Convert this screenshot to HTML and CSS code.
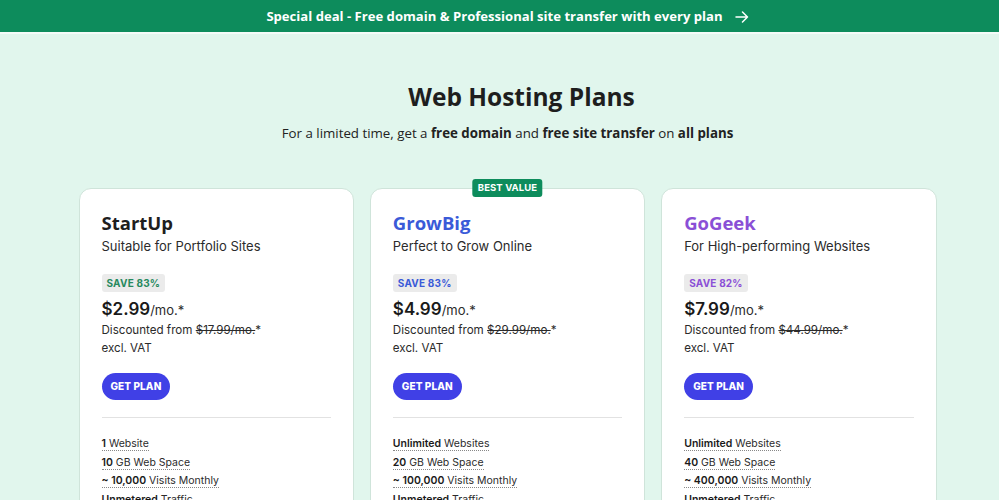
FILE: index.html
```html
<!DOCTYPE html>
<html lang="en">
<head>
<meta charset="utf-8">
<title>Web Hosting Plans</title>
<link rel="stylesheet" href="styles.css">
</head>
<body>
<div class="promo">
  <span>Special deal - Free domain &amp; Professional site transfer with every plan</span>
  <svg class="arrow" width="14" height="12" viewBox="0 0 14 12" aria-hidden="true"><path d="M1 6h11.5M7.5 1l5 5-5 5" fill="none" stroke="#fff" stroke-width="1.5" stroke-linecap="round" stroke-linejoin="round"/></svg>
</div>
<main class="page">
  <h1 class="title">Web Hosting Plans</h1>
  <p class="lead">For a limited time, get a <b>free domain</b> and <b>free site transfer</b> on <b>all plans</b></p>
  <div class="plans">
    <section class="card">
      <h2 class="name">StartUp</h2>
      <p class="tagline">Suitable for Portfolio Sites</p>
      <span class="save save-green">SAVE 83%</span>
      <p class="price"><b>$2.99</b>/mo.*</p>
      <p class="from">Discounted from <s>$17.99/mo.</s>*</p>
      <p class="vat">excl. VAT</p>
      <a class="btn">GET PLAN</a>
      <hr class="rule">
      <ul class="features">
        <li><span><b>1</b> Website</span></li>
        <li><span><b>10</b> GB Web Space</span></li>
        <li><span><b>~ 10,000</b> Visits Monthly</span></li>
        <li><span><b>Unmetered</b> Traffic</span></li>
      </ul>
    </section>
    <section class="card">
      <span class="best">BEST VALUE</span>
      <h2 class="name name-blue">GrowBig</h2>
      <p class="tagline">Perfect to Grow Online</p>
      <span class="save save-blue">SAVE 83%</span>
      <p class="price"><b>$4.99</b>/mo.*</p>
      <p class="from">Discounted from <s>$29.99/mo.</s>*</p>
      <p class="vat">excl. VAT</p>
      <a class="btn">GET PLAN</a>
      <hr class="rule">
      <ul class="features">
        <li><span><b>Unlimited</b> Websites</span></li>
        <li><span><b>20</b> GB Web Space</span></li>
        <li><span><b>~ 100,000</b> Visits Monthly</span></li>
        <li><span><b>Unmetered</b> Traffic</span></li>
      </ul>
    </section>
    <section class="card">
      <h2 class="name name-purple">GoGeek</h2>
      <p class="tagline">For High-performing Websites</p>
      <span class="save save-purple">SAVE 82%</span>
      <p class="price"><b>$7.99</b>/mo.*</p>
      <p class="from">Discounted from <s>$44.99/mo.</s>*</p>
      <p class="vat">excl. VAT</p>
      <a class="btn">GET PLAN</a>
      <hr class="rule">
      <ul class="features">
        <li><span><b>Unlimited</b> Websites</span></li>
        <li><span><b>40</b> GB Web Space</span></li>
        <li><span><b>~ 400,000</b> Visits Monthly</span></li>
        <li><span><b>Unmetered</b> Traffic</span></li>
      </ul>
    </section>
  </div>
</main>
</body>
</html>
```
FILE: styles.css
```css
* { box-sizing: border-box; }
html, body { margin: 0; padding: 0; }
body {
  background: #e1f6ed;
  font-family: Inter, "Noto Sans", sans-serif;
  color: #252525;
  overflow: hidden;
  height: 500px;
}
.promo {
  height: 32px;
  background: #0d8c5c;
  color: #fff;
  display: flex;
  align-items: center;
  justify-content: center;
  gap: 12px;
  padding-left: 16px;
  font-family: "Open Sans", Lato, sans-serif;
  font-weight: 700;
  font-size: 13.1px;
  border-bottom: 2px solid #f4fbf8;
  box-sizing: content-box;
}
.arrow { display: block; margin-top: 1px; }
.page {
  width: 874px;
  margin: 0 auto;
  padding-left: 16px;
  padding-top: 48px;
}
.title {
  margin: 0;
  text-align: center;
  font-family: "Open Sans", Lato, sans-serif;
  font-weight: 700;
  font-size: 24.5px;
  line-height: 30px;
  color: #1e1e1e;
  padding-left: 28px;
}
.lead {
  margin: 11px 0 0;
  text-align: center;
  font-family: "Open Sans", Lato, sans-serif;
  font-size: 13.3px;
  line-height: 20px;
  color: #222;
}
.lead b { font-weight: 700; }
.plans {
  margin-top: 45px;
  display: grid;
  grid-template-columns: repeat(3, 1fr);
  gap: 16px;
}
.card {
  position: relative;
  background: #fff;
  border: 1px solid #cfe4da;
  border-radius: 12px;
  padding: 21px 22px 0;
  height: 330px;
}
.best {
  position: absolute;
  top: -10px;
  left: 50%;
  transform: translateX(-50%);
  background: #0d8c5c;
  color: #fff;
  font-size: 9.5px;
  font-weight: 700;
  line-height: 18px;
  padding: 0 5px;
  border-radius: 3px;
  letter-spacing: 0.1px;
}
.name {
  margin: 0;
  font-family: "Open Sans", Lato, sans-serif;
  font-weight: 700;
  font-size: 18.5px;
  line-height: 26px;
  color: #1e1e1e;
}
.name-blue { color: #3a5ad8; }
.name-purple { color: #8a4fd6; }
.tagline {
  margin: 0;
  font-size: 13px;
  line-height: 20px;
  color: #2b2b2b;
}
.save {
  display: inline-block;
  margin-top: 18px;
  background: #ebebeb;
  font-size: 10px;
  font-weight: 700;
  line-height: 18px;
  padding: 0 5px;
  border-radius: 3px;
  letter-spacing: 0.2px;
}
.save-green { color: #27895e; }
.save-blue { color: #3a5ad8; }
.save-purple { color: #8a4fd6; }
.price {
  margin: 7px 0 0;
  font-size: 13px;
  line-height: 21px;
  color: #2b2b2b;
}
.price b {
  font-size: 17px;
  font-weight: 600;
  color: #1a1a1a;
}
.from, .vat {
  margin: 0;
  font-size: 11.6px;
  line-height: 18px;
  color: #2b2b2b;
}
.btn {
  display: inline-block;
  margin-top: 16px;
  background: #4040e6;
  color: #fff;
  font-size: 10px;
  font-weight: 800;
  line-height: 27px;
  padding: 0 9px;
  border-radius: 14px;
  letter-spacing: 0.1px;
}
.rule {
  margin: 17px 0 0;
  border: 0;
  border-top: 1px solid #e2e2e2;
}
.features {
  list-style: none;
  margin: 17px 0 0;
  padding: 0;
  font-size: 10.5px;
  line-height: 18.5px;
  color: #2b2b2b;
}
.features span {
  border-bottom: 1px dotted #888;
}
.features b { font-weight: 600; color: #1a1a1a; }
```
